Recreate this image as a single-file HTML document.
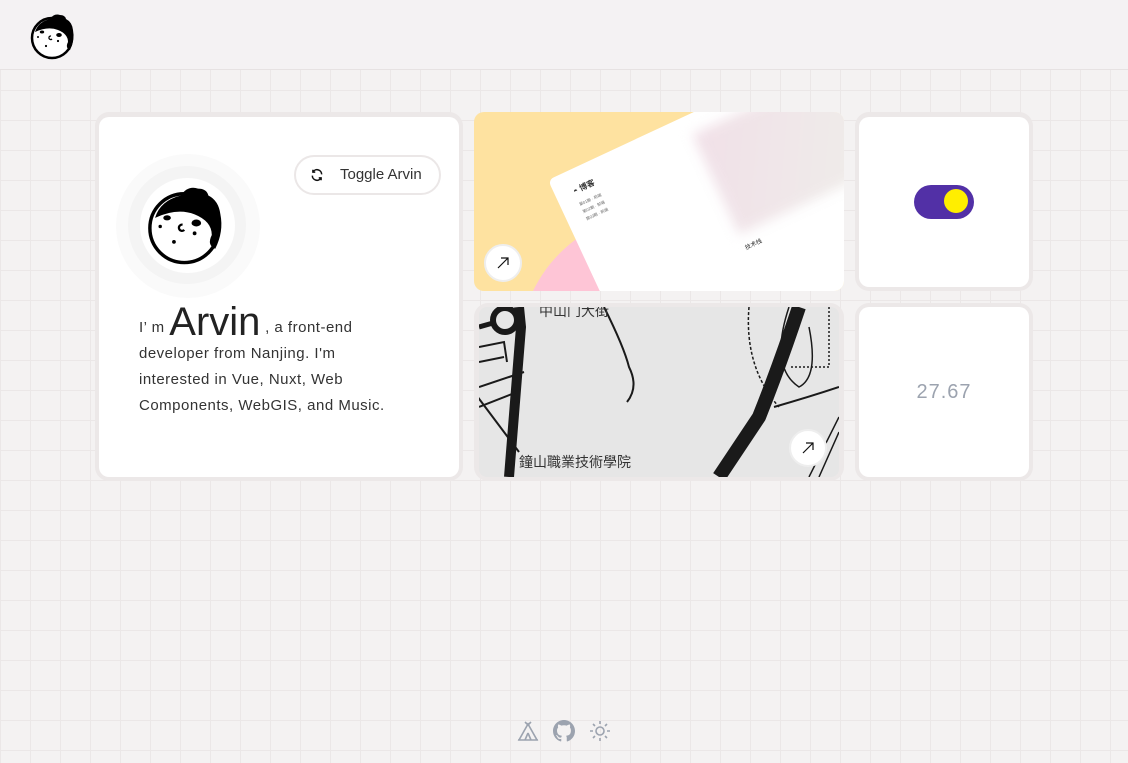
<!DOCTYPE html><html><head><meta charset="utf-8"><style>
*{margin:0;padding:0;box-sizing:border-box}
body{width:1128px;height:763px;overflow:hidden;font-family:"Liberation Sans","Noto Sans CJK TC",sans-serif;background-color:#f4f2f2;background-image:linear-gradient(#ebe7e7 1px,transparent 1px),linear-gradient(90deg,#ebe7e7 1px,transparent 1px);background-size:30px 30px;background-position:0 0;position:relative}
.hdr{position:absolute;left:0;top:0;width:1128px;height:70px;background:#f4f2f3;border-bottom:1px solid #e6e2e2}
.ring{position:absolute;background:#ece8e8;border-radius:14px}
.card{position:absolute;background:#fff;border-radius:10px;overflow:hidden}
.btn{position:absolute;left:294px;top:155px;width:147px;height:40px;border:2px solid #ebe7e7;border-radius:20px;background:#fff;font-size:15px;color:#333}
.txt{position:absolute;left:139px;top:309px;width:262px;font-size:15px;line-height:26px;color:#333;letter-spacing:.5px}
.arr{position:absolute;width:38px;height:38px;border-radius:50%;background:#fff;border:2px solid #eee}
</style></head><body>
<div class="hdr"></div>
<svg style="position:absolute;left:28px;top:10px" width="50" height="50" viewBox="0 0 50 50"><circle cx="24" cy="28" r="20" fill="#fff" stroke="#000" stroke-width="2.5"/><path d="M7 22 Q10 12 22 9 Q26 3 32 5 Q37 5 38 9 Q44 12 45 20 Q47 30 42 40 Q37 38 40 32 Q40 24 30 20 Q20 16 7 22Z" fill="#000"/><ellipse cx="17" cy="22" rx="3" ry="1.8" fill="#fff"/><ellipse cx="14" cy="22" rx="2.2" ry="1.5" fill="#000"/><ellipse cx="31" cy="25" rx="2.8" ry="2" fill="#000"/><circle cx="10" cy="27" r="1" fill="#000"/><path d="M23 26 a1.8 1.8 0 1 0 1 3" stroke="#000" stroke-width="1.3" fill="none"/><circle cx="30" cy="31" r="1.1" fill="#000"/><circle cx="18" cy="36" r="1.1" fill="#000"/></svg>
<div class="ring" style="left:95px;top:112px;width:368px;height:369px"></div>
<div class="card" style="left:99px;top:117px;width:360px;height:360px"></div>
<div style="position:absolute;left:116px;top:154px;width:144px;height:144px;border-radius:50%;background:#fafafa"></div>
<div style="position:absolute;left:128px;top:166px;width:118px;height:118px;border-radius:50%;background:#f4f4f4"></div>
<div style="position:absolute;left:140px;top:178px;width:95px;height:95px;border-radius:50%;background:#fff"></div>
<svg style="position:absolute;left:143px;top:180px" width="86" height="86" viewBox="0 0 50 50"><circle cx="24" cy="28" r="20" fill="#fff" stroke="#000" stroke-width="2"/><path d="M7 22 Q10 12 22 9 Q26 3 32 5 Q37 5 38 9 Q44 12 45 20 Q47 30 42 40 Q37 38 40 32 Q40 24 30 20 Q20 16 7 22Z" fill="#000"/><ellipse cx="17" cy="22" rx="3" ry="1.8" fill="#fff"/><ellipse cx="14" cy="22" rx="2.2" ry="1.5" fill="#000"/><ellipse cx="31" cy="25" rx="2.8" ry="2" fill="#000"/><circle cx="10" cy="27" r="1" fill="#000"/><path d="M23 26 a1.8 1.8 0 1 0 1 3" stroke="#000" stroke-width="1.3" fill="none"/><circle cx="30" cy="31" r="1.1" fill="#000"/><circle cx="18" cy="36" r="1.1" fill="#000"/></svg>
<div class="btn"><svg style="position:absolute;left:14px;top:11px" width="14" height="14" viewBox="0 0 24 24" fill="none" stroke="#111" stroke-width="2.6"><path d="M20 11A8 8 0 0 0 5 7M4 13a8 8 0 0 0 15 4"/><path d="M5 3v4h4M19 21v-4h-4"/></svg><span style="position:absolute;left:44px;top:9px">Toggle Arvin</span></div>
<div class="txt">I’ m <span style="font-size:40px;color:#222;letter-spacing:0;vertical-align:-3px;line-height:26px">Arvin</span> , a front-end developer from Nanjing. I'm interested in Vue, Nuxt, Web Components, WebGIS, and Music.</div>

<div class="card" style="left:474px;top:112px;width:370px;height:179px;background:#fee2a0">
<div style="position:absolute;left:45px;top:100px;width:280px;height:280px;border-radius:50%;background:#fec5d6"></div>
<div style="position:absolute;width:420px;height:260px;background:#fff;border-radius:6px;transform:rotate(-25deg);transform-origin:0 0;left:74px;top:68px">
<div style="position:absolute;left:150px;top:20px;width:200px;height:110px;background:linear-gradient(120deg,#f1e0e8,#eef0ea);filter:blur(6px)"></div>
<div style="position:absolute;left:18px;top:16px;font-size:8px;color:#333;font-weight:bold">◓ 博客</div>
<div style="position:absolute;left:18px;top:32px;font-size:4px;line-height:8px;color:#666">第01期 · 前端<br>第02期 · 前端<br>第03期 · 前端</div>
<div style="position:absolute;left:150px;top:140px;font-size:6px;color:#333">技术栈</div>
<div style="position:absolute;left:250px;top:10px;font-size:8px;color:#333;font-weight:bold">第01期 - 要</div></div>
<div class="arr" style="left:10px;top:132px"><svg style="position:absolute;left:10px;top:10px" width="14" height="14" viewBox="0 0 14 14" stroke="#111" fill="none" stroke-width="1.2"><path d="M2 12L12 2M5 2h7v7"/></svg></div>
</div>

<div class="ring" style="left:474px;top:303px;width:370px;height:178px"></div>
<div class="card" style="left:479px;top:307px;width:360px;height:170px;background:#e6e6e6;border-radius:8px">
<svg width="360" height="170" viewBox="0 0 360 170" fill="none" stroke="#1a1a1a">
<path d="M40 0 L42 20 L30 170" stroke-width="10"/><circle cx="26" cy="13" r="12" stroke-width="6"/><path d="M0 20 L14 16" stroke-width="5"/>
<path d="M0 40L25 35L28 55M0 55L25 50M0 80L30 70L45 65M0 100L38 85M-5 85 L40 145" stroke-width="2"/>
<path d="M125 0 Q145 40 150 60 Q160 80 148 95" stroke-width="2"/>
<path d="M320 0 Q300 60 280 110 L240 170" stroke-width="14"/>
<path d="M270 0 Q265 60 300 100" stroke-width="1.5" stroke-dasharray="3 2"/>
<path d="M310 0 Q290 60 320 80 Q340 70 330 20" stroke-width="1.5"/>
<path d="M295 100 Q330 90 360 80" stroke-width="2"/>
<path d="M350 0 L350 60 L310 60" stroke-width="1.5" stroke-dasharray="2 2"/>
<path d="M360 110L330 170M360 125L340 170" stroke-width="1.5"/>
</svg>
<div style="position:absolute;left:40px;top:145px;font-size:14px;color:#333">鐘山職業技術學院</div>
<div style="position:absolute;left:60px;top:-6px;font-size:14px;color:#333">中山门大街</div>
<div class="arr" style="left:310px;top:122px"><svg style="position:absolute;left:10px;top:10px" width="14" height="14" viewBox="0 0 14 14" stroke="#111" fill="none" stroke-width="1.2"><path d="M2 12L12 2M5 2h7v7"/></svg></div>
</div>

<div class="ring" style="left:855px;top:112px;width:178px;height:179px"></div>
<div class="card" style="left:859px;top:117px;width:170px;height:170px"></div>
<div style="position:absolute;left:914px;top:185px;width:60px;height:34px;border-radius:17px;background:#5230a6"></div>
<div style="position:absolute;left:944px;top:189px;width:24px;height:24px;border-radius:50%;background:#ffee00"></div>
<div class="ring" style="left:855px;top:303px;width:178px;height:178px"></div>
<div class="card" style="left:859px;top:307px;width:170px;height:170px"></div>
<div style="position:absolute;left:859px;top:381px;width:170px;text-align:center;font-size:20px;color:#9ca3af;letter-spacing:1px">27.67</div>

<svg style="position:absolute;left:517px;top:720px" width="22" height="22" viewBox="0 0 22 22" stroke="#9ca3af" fill="none" stroke-width="1.6"><path d="M2 20L11 4L20 20ZM1 20h20M8 2l3 3 3-3M11 13l-3 7M11 13l3 7"/></svg>
<svg style="position:absolute;left:553px;top:720px" width="22" height="22" viewBox="0 0 16 16" fill="#9ca3af"><path d="M8 0C3.58 0 0 3.580 0 8c0 3.54 2.29 6.53 5.47 7.59.4.07.55-.17.55-.38 0-.19-.01-.82-.01-1.49-2.01.37-2.53-.49-2.69-.94-.09-.23-.48-.94-.82-1.13-.28-.15-.68-.52-.01-.53.63-.01 1.08.58 1.23.82.72 1.21 1.87.87 2.33.66.07-.52.28-.87.51-1.07-1.78-.2-3.64-.89-3.64-3.95 0-.87.31-1.59.82-2.15-.08-.2-.36-1.02.08-2.12 0 0 .67-.21 2.2.82.64-.18 1.32-.27 2-.27s1.36.09 2 .27c1.53-1.04 2.2-.82 2.2-.82.44 1.1.16 1.92.08 2.12.51.56.82 1.27.82 2.15 0 3.07-1.87 3.75-3.65 3.95.29.25.54.73.54 1.48 0 1.07-.01 1.93-.01 2.2 0 .21.15.46.55.38A8.01 8.01 0 0 0 16 8c0-4.42-3.58-8-8-8z"/></svg>
<svg style="position:absolute;left:589px;top:720px" width="22" height="22" viewBox="0 0 22 22" stroke="#9ca3af" fill="none" stroke-width="1.6"><circle cx="11" cy="11" r="4"/><path d="M11 1v3M11 18v3M1 11h3M18 11h3M4 4l2 2M16 16l2 2M4 18l2-2M16 6l2-2"/></svg>
</body></html>
